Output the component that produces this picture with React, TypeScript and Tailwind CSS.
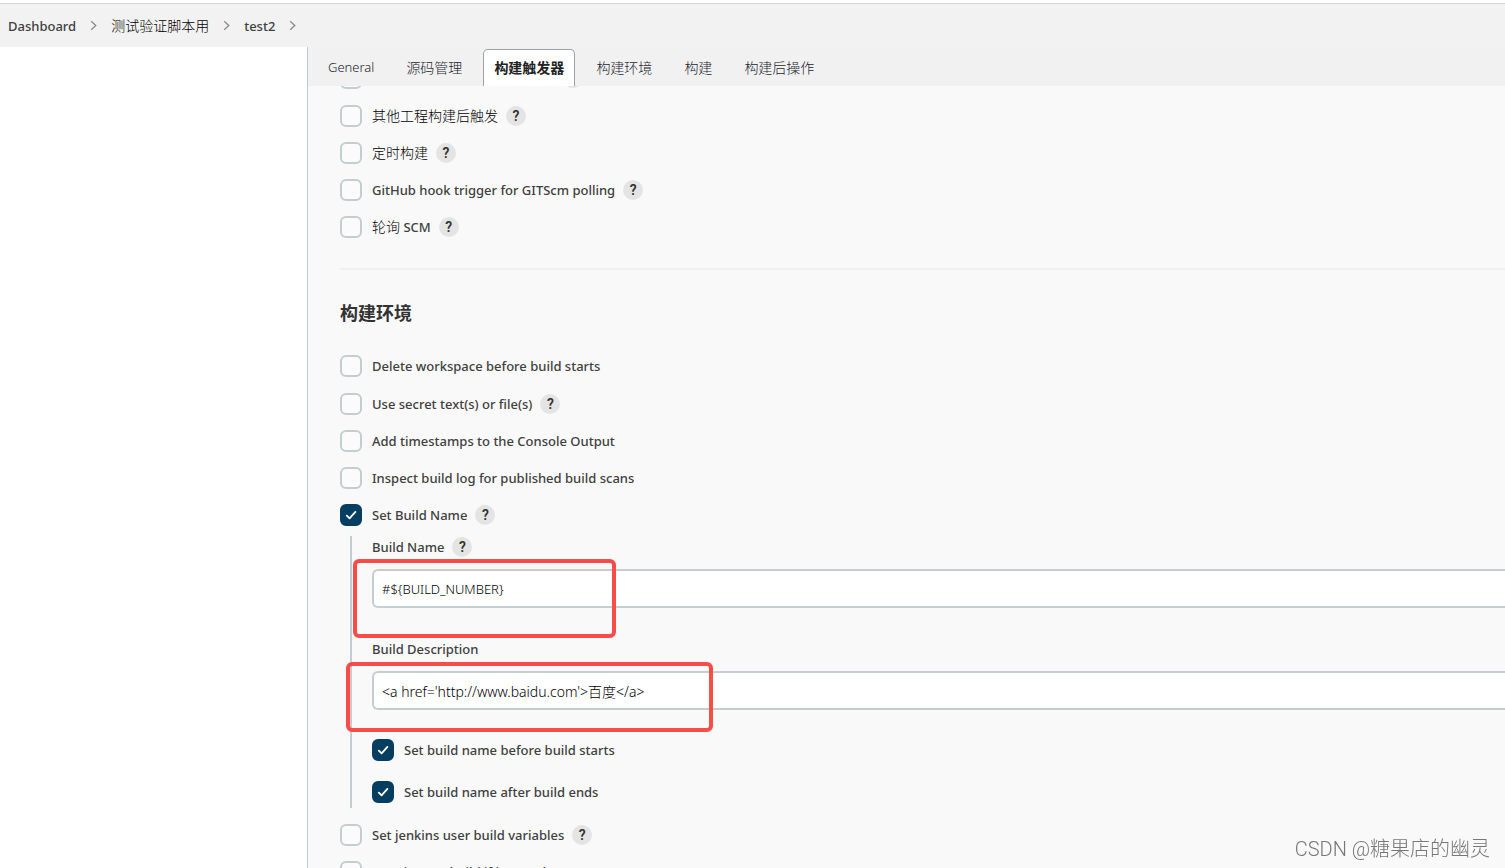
import React from 'react'

const latin = "font-['Noto_Sans','Noto_Sans_CJK_SC',sans-serif]"
const hanzi = "font-['Noto_Sans_CJK_SC',sans-serif]"

const Chevron = () => (
  <svg className="h-3 w-[7px] shrink-0" viewBox="0 0 7 12" fill="none" stroke="#8b8b8b" strokeWidth="1.3">
    <path d="M1.2 1.2 5.8 5.5 1.2 9.8" />
  </svg>
)

const Help = ({ topic }: { topic: string }) => (
  <button
    type="button"
    aria-label={`Help for ${topic}`}
    className="ml-2 flex h-5 w-5 shrink-0 items-center justify-center rounded-full bg-[#e4e4e4] font-['Roboto',sans-serif] text-[14px] leading-5 font-semibold text-[#333]"
  >
    ?
  </button>
)

interface OptionProps {
  id: string
  label: string
  suffix?: string
  cjk?: boolean
  help?: boolean
  checked?: boolean
}

const Option = ({ id, label, suffix, cjk, help, checked }: OptionProps) => (
  <div className="flex h-[22px] items-center">
    <span className="grid shrink-0 place-items-center">
      <input
        id={id}
        type="checkbox"
        defaultChecked={checked}
        className="peer col-start-1 row-start-1 h-[22px] w-[22px] appearance-none rounded-[6px] border-2 border-[#c3cdd2] bg-[#fbfbfb] checked:border-[#063e61] checked:bg-[#063e61]"
      />
      <svg
        className="pointer-events-none invisible col-start-1 row-start-1 h-[22px] w-[22px] peer-checked:visible"
        viewBox="0 0 22 22"
        fill="none"
        stroke="#fff"
        strokeWidth="1.8"
        strokeLinecap="round"
        strokeLinejoin="round"
      >
        <path d="M6.8 11.6 9.6 14.4 15.4 7.9" />
      </svg>
    </span>
    <label
      htmlFor={id}
      className={`ml-[10px] leading-5 whitespace-nowrap ${cjk ? 'text-[14px] font-light text-black' : 'text-[13px] font-medium'}`}
    >
      {label}
      {suffix && <span className="text-[13px] font-medium text-[#404040]"> {suffix}</span>}
    </label>
    {help && <Help topic={label} />}
  </div>
)

const tabs = ['General', '源码管理', '构建触发器', '构建环境', '构建', '构建后操作']

const Header = () => (
  <nav
    aria-label="Breadcrumb"
    className="mt-[3px] flex h-11 shrink-0 items-center gap-[14px] border-t border-[#d6d6d6] bg-[#f2f2f2] pl-2 text-[13px] leading-5 font-medium"
  >
    <a href="#dashboard">Dashboard</a>
    <Chevron />
    <a href="#folder" className="text-[14px] font-light text-black">测试验证脚本用</a>
    <Chevron />
    <a href="#test2">test2</a>
    <Chevron />
  </nav>
)

const TabBar = () => (
  <div role="tablist" className="flex h-[39px] shrink-0 items-end gap-[10px] bg-[#f1f1f1] pl-[9px]">
    {tabs.map((tab) => {
      const active = tab === '构建触发器'
      return (
        <button
          key={tab}
          type="button"
          role="tab"
          aria-selected={active}
          className={`h-[37px] rounded-t-[5px] border border-b-0 px-[10px] pb-[2px] text-[14px] whitespace-nowrap ${hanzi} ${
            active ? 'border-[#98a4ad] bg-white font-bold text-[#222]' : 'border-transparent font-light text-[#1c2530]'
          }`}
        >
          {tab === 'General' ? <span className="font-['Noto_Sans',sans-serif] text-[13px]">{tab}</span> : tab}
        </button>
      )
    })}
  </div>
)

const inputClass =
  'mt-3 block h-[39px] w-full rounded-l-[6px] border-2 border-r-0 border-[#c3cdd2] bg-white px-2 font-light text-black outline-none'

const fieldLabel = 'text-[13px] leading-5 font-medium'

const BuildNameFields = () => (
  <div className="mt-[10px] mb-px ml-[10px] border-l-2 border-[#c3cdd2] pt-px pb-[5px] pl-5">
    <div className="relative">
      <div className="flex h-5 items-center">
        <label htmlFor="build-name" className={fieldLabel}>Build Name</label>
        <Help topic="Build Name" />
      </div>
      <input id="build-name" type="text" defaultValue="#${BUILD_NUMBER}" className={`${inputClass} text-[13px]`} />
      <div className="pointer-events-none absolute top-[22px] -left-[19px] h-[79px] w-[263px] rounded-[6px] border-4 border-[#f84c48]" />
    </div>
    <div className="relative mt-[31px]">
      <div className="flex h-5 items-center">
        <label htmlFor="build-description" className={fieldLabel}>Build Description</label>
      </div>
      <input
        id="build-description"
        type="text"
        defaultValue="<a href='http://www.baidu.com'>百度</a>"
        className={`${inputClass} text-[14px]`}
      />
      <div className="pointer-events-none absolute top-[23px] -left-[26px] h-[70px] w-[367px] rounded-[6px] border-4 border-[#f84c48]" />
    </div>
    <div className="mt-[29px] flex flex-col gap-5">
      <Option id="before-start" label="Set build name before build starts" checked />
      <Option id="after-end" label="Set build name after build ends" checked />
    </div>
  </div>
)

export default function App() {
  return (
    <div className={`flex h-screen flex-col overflow-hidden bg-white text-[#404040] ${latin}`}>
      <Header />
      <div className="flex min-h-0 flex-1">
        <aside className="w-[307px] shrink-0 bg-white" />
        <main className="flex min-w-0 flex-1 flex-col border-l border-[#c3c9cd] bg-[#f9f9f9]">
          <TabBar />
          <form className="min-h-0 flex-1 overflow-hidden pl-8">
            {/* scrolled so the first trigger sits mostly under the tab bar */}
            <section className="-mt-[19px] flex flex-col gap-[15px] [&>*:first-child]:mb-px">
              <Option id="remote" label="触发远程构建 (例如,使用脚本)" cjk help />
              <Option id="upstream" label="其他工程构建后触发" cjk help />
              <Option id="timer" label="定时构建" cjk help />
              <Option id="github" label="GitHub hook trigger for GITScm polling" help />
              <Option id="scm" label="轮询" suffix="SCM" cjk help />
            </section>
            <hr className="mt-[30px] border-t-2 border-[#f0f0f0]" />
            <h2 className="mt-[31px] text-[18px] leading-6 font-bold text-[#333]">构建环境</h2>
            <section className="mt-[30px] flex flex-col gap-[15px] [&>*:first-child]:mb-px">
              <Option id="delete-ws" label="Delete workspace before build starts" />
              <Option id="secrets" label="Use secret text(s) or file(s)" help />
              <Option id="timestamps" label="Add timestamps to the Console Output" />
              <Option id="scans" label="Inspect build log for published build scans" />
              <div>
                <Option id="set-name" label="Set Build Name" help checked />
                <BuildNameFields />
              </div>
              <Option id="user-vars" label="Set jenkins user build variables" help />
              <Option id="terminate" label="Terminate a build if it's stuck" />
            </section>
          </form>
        </main>
      </div>
      <p className="pointer-events-none fixed right-[15px] bottom-1 font-['Roboto','Noto_Sans_CJK_SC',sans-serif] text-[20px] leading-[30px] font-light text-[#777]">
        CSDN @糖果店的幽灵
      </p>
    </div>
  )
}
